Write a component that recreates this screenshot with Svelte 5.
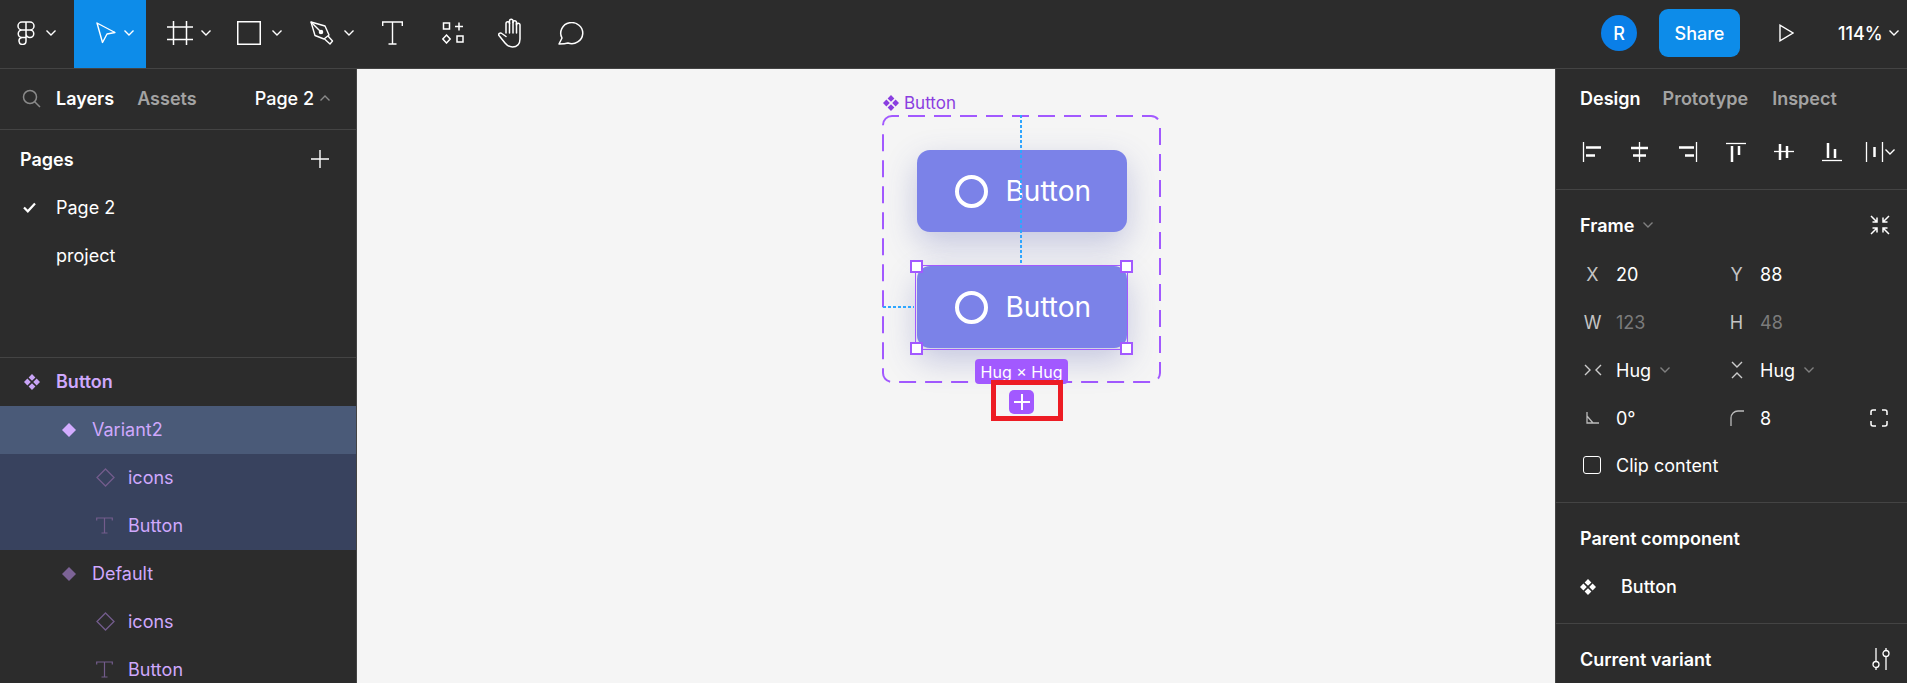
<script>
  const alignIcons = [
    { line: "M1.500 0v20", bars: "M4 5.500h15M4 13.500h9" },
    { line: "M9.500 0v20", bars: "M1 6h17M3 13.500h13" },
    { line: "M18.500 0v20", bars: "M1 5.500h15M7 13.500h9" },
    { line: "M0 1.500h20", bars: "M6 4v16M13 4v9" },
    { line: "M0 9.500h20", bars: "M6 2v16M13 4v12" },
    { line: "M0 18.500h20", bars: "M6 1v15M13 7v9" },
    { line: "M1.500 0v20M17.500 0v20", bars: "M9.500 5v10" }
  ];
  const pages = [
    { name: "Page 2", active: true },
    { name: "project", active: false }
  ];
  const layers = [
    { name: "Button", kind: "set", depth: 0 },
    { name: "Variant2", kind: "main", depth: 1, tone: "sel" },
    { name: "icons", kind: "inst", depth: 2, tone: "child" },
    { name: "Button", kind: "text", depth: 2, tone: "child" },
    { name: "Default", kind: "main", depth: 1, dim: true },
    { name: "icons", kind: "inst", depth: 2 },
    { name: "Button", kind: "text", depth: 2 }
  ];
  const handles = ["tl", "tr", "bl", "br"];
</script>

{#snippet chevron(color = "#fff")}
  <svg class="chev" width="12" height="8" viewBox="0 0 12 8" fill="none" stroke={color} stroke-width="1.4"><path d="M1.5 1.5 6 6l4.500-4.500"/></svg>
{/snippet}

{#snippet setIcon(color, size = 16)}
  <svg width={size} height={size} viewBox="0 0 16 16" fill={color}><path d="M8 0l3.400 3.400L8 6.800 4.600 3.400zM8 9.200l3.400 3.400L8 16l-3.400-3.400zM3.400 4.600 6.800 8l-3.400 3.400L0 8zM12.600 4.600 16 8l-3.400 3.400L9.200 8z"/></svg>
{/snippet}

<div class="app">
  <header class="topbar">
    <div class="tool t-logo">
      <svg width="18" height="24" viewBox="0 0 18 24" fill="none" stroke="#fff" stroke-width="1.5"><path d="M9 1H5a4 4 0 0 0 0 8h4zM9 1h4a4 4 0 0 1 0 8H9zM9 9H5a3.500 3.500 0 0 0 0 7.500h4zM9 9h4a3.750 3.750 0 0 1 0 7.500A3.750 3.750 0 0 1 9 12.750zM9 16.500H5A3.500 3.500 0 1 0 9 20z"/></svg>
      {@render chevron()}
    </div>
    <div class="tool t-move">
      <svg width="20" height="22" viewBox="0 0 20 22" fill="none" stroke="#fff" stroke-width="1.4" stroke-linejoin="round"><path d="M1 1l18 9.500-8 1.500-4.500 8.500z"/></svg>
      {@render chevron()}
    </div>
    <div class="tool t-frame">
      <svg width="26" height="24" viewBox="0 0 26 24" fill="none" stroke="#fff" stroke-width="1.5"><path d="M6.500 0v24M19.500 0v24M0 6h26M0 18.500h26"/></svg>
      {@render chevron()}
    </div>
    <div class="tool t-rect">
      <svg width="24" height="24" viewBox="0 0 24 24" fill="none" stroke="#fff" stroke-width="1.500"><rect x=".75" y=".75" width="22.500" height="22.500"/></svg>
      {@render chevron()}
    </div>
    <div class="tool t-pen">
      <svg width="24" height="24" viewBox="0 0 24 24" fill="none" stroke="#fff" stroke-width="1.400" stroke-linejoin="round"><path d="M1 1l14 4 4 9-5 4-9-3.500z"/><path d="M18 15l4.500 5-2.500 3-5.500-5"/><path d="M1 1l9 9"/><circle cx="11" cy="11" r="1.600" fill="#fff"/></svg>
      {@render chevron()}
    </div>
    <div class="tool t-text">
      <svg width="21" height="24" viewBox="0 0 21 24" fill="none" stroke="#fff" stroke-width="1.400"><path d="M.7 5V1h19.600v4M10.500 1v22M6.500 23h8"/></svg>
    </div>
    <div class="tool t-comp">
      <svg width="23" height="22" viewBox="0 0 23 22" fill="none" stroke="#fff" stroke-width="1.500"><rect x="1.500" y="1" width="6" height="6"/><path d="M17 .5v8M13 4.500h8"/><path d="M4.500 13l3.700 4-3.700 4-3.700-4z"/><rect x="15" y="14" width="6" height="6"/></svg>
    </div>
    <div class="tool t-hand">
      <svg width="27" height="30" viewBox="0 0 27 30" fill="none" stroke="#fff" stroke-width="1.500" stroke-linecap="round" stroke-linejoin="round"><path d="M8 15V5.500a1.750 1.750 0 0 1 3.500 0V3a1.750 1.750 0 0 1 3.500 0v1.500a1.750 1.750 0 0 1 3.500 0V7a1.750 1.750 0 0 1 3.500 0v14c0 5-3 8-7.500 8-3.500 0-5.500-1.500-7.500-4l-6-7.500c-1-1.500 1.200-3.500 2.800-2L8 18.500"/><path d="M11.500 5v10M15 4v11M18.500 5v10"/></svg>
    </div>
    <div class="tool t-comment">
      <svg width="27" height="23" viewBox="0 0 27 23" fill="none" stroke="#fff" stroke-width="1.500" stroke-linejoin="round"><path d="M1 22l3-6a11 10.500 0 1 1 6 5c-3 1-6 1-9 1z"/></svg>
    </div>
    <div class="top-right">
      <div class="avatar">R</div>
      <div class="share">Share</div>
      <svg class="play" width="15" height="18" viewBox="0 0 15 18" fill="none" stroke="#fff" stroke-width="1.400"><path d="M1 1.200v15.600L14 9z"/></svg>
      <div class="zoom-val">114%</div>
      {@render chevron()}
    </div>
  </header>

  <div class="body">
    <aside class="left">
      <div class="left-tabs">
        <svg width="19" height="19" viewBox="0 0 19 19" fill="none" stroke="#8a8a8a" stroke-width="1.500"><circle cx="8" cy="8" r="6.500"/><path d="M12.500 12.500 18 18"/></svg>
        <span class="tab on">Layers</span>
        <span class="tab assets">Assets</span>
        <span class="page-pick">Page 2</span>
        <svg width="12" height="8" viewBox="0 0 12 8" fill="none" stroke="#8a8a8a" stroke-width="1.400"><path d="M1.500 6.500 6 2l4.500 4.500"/></svg>
      </div>
      <div class="pages">
        <div class="row pages-head">
          <span class="strong">Pages</span>
          <svg width="18" height="18" viewBox="0 0 18 18" stroke="#fff" stroke-width="1.400"><path d="M9 0v18M0 9h18"/></svg>
        </div>
        {#each pages as p}
          <div class="row page">
            <span class="check">
              {#if p.active}
                <svg width="13" height="11" viewBox="0 0 13 11" fill="none" stroke="#fff" stroke-width="2.200"><path d="M1 5.500l3.800 3.800L12 1.500"/></svg>
              {/if}
            </span>
            {p.name}
          </div>
        {/each}
      </div>
      <div class="layers">
        {#each layers as l}
          <div class="layer d{l.depth} {l.tone ?? ''}">
            <span class="layer-ico">
              {#if l.kind === "set"}
                {@render setIcon("#c9a4f7")}
              {:else if l.kind === "main"}
                <svg width="14" height="14" viewBox="0 0 14 14" fill={l.dim ? "#7c6396" : "#d3acff"}><path d="M7 0l7 7-7 7-7-7z"/></svg>
              {:else if l.kind === "inst"}
                <svg width="19" height="19" viewBox="0 0 19 19" fill="none" stroke="#735c8c" stroke-width="1.300"><path d="M9.500 1 18 9.500 9.500 18 1 9.500z"/></svg>
              {:else}
                <svg width="17" height="17" viewBox="0 0 17 17" fill="none" stroke="#735c8c" stroke-width="1.200"><path d="M.7 3.500V1h15.600v2.500M8.500 1v15M5.500 16h6"/></svg>
              {/if}
            </span>
            <span class:strong-lilac={l.depth === 0}>{l.name}</span>
          </div>
        {/each}
      </div>
    </aside>

    <main class="canvas">
      <div class="frame-label">
        {@render setIcon("#8a3ee0", 16)}
        <span>Button</span>
      </div>
      <div class="frame">
        <svg class="dash" width="279" height="268" viewBox="0 0 279 268" fill="none" stroke="#a259ff" stroke-width="2"><rect x="1" y="1" width="277" height="266" rx="9" stroke-dasharray="17 9" stroke-dashoffset="10"/></svg>
        <div class="btn">
          <span class="ring"></span>
          <span>Button</span>
        </div>
        <div class="btn selected">
          <span class="ring"></span>
          <span>Button</span>
          {#each handles as h}
            <i class="handle {h}"></i>
          {/each}
        </div>
        <div class="guide-v"></div>
        <div class="guide-h"></div>
      </div>
      <div class="pill">Hug × Hug</div>
      <div class="callout">
        <div class="add">
          <svg width="18" height="18" viewBox="0 0 18 18" stroke="#fff" stroke-width="2"><path d="M9 1v16M1 9h16"/></svg>
        </div>
      </div>
    </main>

    <aside class="right">
      <div class="right-tabs">
        <span class="strong">Design</span>
        <span class="tab proto">Prototype</span>
        <span class="tab inspect">Inspect</span>
      </div>
      <div class="aligns">
        {#each alignIcons as a}
          <svg width="20" height="20" viewBox="0 0 20 20" fill="none" stroke="#fff"><path d={a.line} stroke-width="1.300"/><path d={a.bars} stroke-width="2.500"/></svg>
        {/each}
        <span class="align-chev">{@render chevron()}</span>
      </div>
      <section class="sec frame-sec">
        <div class="prop-head">
          <span class="strong">Frame</span>
          {@render chevron("#808080")}
          <svg class="end" width="20" height="20" viewBox="0 0 20 20" fill="none" stroke="#fff" stroke-width="1.500"><path d="M1 1l6 6M7 2.500V7H2.500M19 1l-6 6M13 2.500V7h4.500M1 19l6-6M7 17.500V13H2.500M19 19l-6-6M13 17.500V13h4.500"/></svg>
        </div>
        <div class="props">
          <span class="lab">X</span><span class="val">20</span>
          <span class="lab">Y</span><span class="val">88</span>
          <i></i>

          <span class="lab">W</span><span class="val dim">123</span>
          <span class="lab">H</span><span class="val dim">48</span>
          <i></i>

          <span class="lab">
            <svg width="18" height="12" viewBox="0 0 18 12" fill="none" stroke="#ccc" stroke-width="1.400"><path d="M1 1l5 5-5 5M17 1l-5 5 5 5"/></svg>
          </span>
          <span class="val">Hug {@render chevron("#808080")}</span>
          <span class="lab">
            <svg width="12" height="18" viewBox="0 0 12 18" fill="none" stroke="#ccc" stroke-width="1.400"><path d="M1 1l5 5 5-5M1 17l5-5 5 5"/></svg>
          </span>
          <span class="val">Hug {@render chevron("#808080")}</span>
          <i></i>

          <span class="lab">
            <svg width="13" height="12" viewBox="0 0 13 12" fill="none" stroke="#bbb" stroke-width="1.300"><path d="M1 0v11h12M1 4l6 7"/></svg>
          </span>
          <span class="val">0°</span>
          <span class="lab">
            <svg width="14" height="16" viewBox="0 0 14 16" fill="none" stroke="#bbb" stroke-width="1.300"><path d="M1 16V8a7 7 0 0 1 7-7h6"/></svg>
          </span>
          <span class="val">8</span>
          <svg class="corners" width="18" height="18" viewBox="0 0 18 18" fill="none" stroke="#fff" stroke-width="1.500"><path d="M1 6V3a2 2 0 0 1 2-2h3M12 1h3a2 2 0 0 1 2 2v3M17 12v3a2 2 0 0 1-2 2h-3M6 17H3a2 2 0 0 1-2-2v-3"/></svg>
        </div>
        <label class="clip"><span class="box"></span>Clip content</label>
      </section>
      <section class="sec parent-sec">
        <div class="prop-head strong">Parent component</div>
        <div class="parent">
          {@render setIcon("#fff")}
          <span>Button</span>
        </div>
      </section>
      <section class="sec variant-sec">
        <div class="prop-head">
          <span class="strong">Current variant</span>
          <svg class="end" width="18" height="22" viewBox="0 0 18 22" fill="none" stroke="#fff" stroke-width="1.300"><path d="M4 0v13M4 20v2M14 0v2M14 9v13"/><circle cx="4" cy="16.500" r="3"/><circle cx="14" cy="5.500" r="3"/></svg>
        </div>
      </section>
    </aside>
  </div>
</div>

<style>
  :global(body) {
    margin: 0;
    background: #2c2c2c;
    font-family: Inter, "Liberation Sans", sans-serif;
    font-size: 18px;
    color: #fff;
  }

  svg {
    display: block;
    flex: none;
  }

  .app {
    width: 1907px;
    height: 683px;
    display: flex;
    flex-direction: column;
    overflow: hidden;
  }

  .topbar {
    height: 68px;
    flex: none;
    display: flex;
    align-items: stretch;
    background: #2c2c2c;
    border-bottom: 1px solid #444;
  }

  .tool {
    display: flex;
    align-items: center;
    flex: none;
    box-sizing: border-box;
    padding-bottom: 2px;
  }

  .t-logo { width: 74px; padding-left: 17px; gap: 10px; }
  .t-move { width: 72px; padding-left: 22px; gap: 7px; background: #0d8ce9; }
  .t-frame { width: 71px; padding-left: 21px; gap: 7px; }
  .t-rect { width: 72px; padding-left: 20px; gap: 10px; }
  .t-pen { width: 72px; padding-left: 21px; gap: 9px; }
  .t-text { width: 60px; padding-left: 21px; }
  .t-comp { width: 77px; padding-left: 21px; }
  .t-hand { width: 60px; }
  .t-comment { width: 60px; }

  .top-right {
    margin-left: auto;
    display: flex;
    align-items: center;
    padding: 0 7px 2px 0;
  }

  .avatar {
    width: 36px;
    height: 36px;
    border-radius: 50%;
    background: #0a7fe8;
    display: flex;
    align-items: center;
    justify-content: center;
    font-weight: 500;
  }

  .share {
    width: 81px;
    height: 48px;
    margin-left: 22px;
    border-radius: 9px;
    background: #0d8ce9;
    display: flex;
    align-items: center;
    justify-content: center;
    font-weight: 500;
  }

  .play { margin-left: 39px; }

  .zoom-val {
    width: 42px;
    margin-left: 44px;
    margin-right: 8px;
    white-space: nowrap;
    font-weight: 500;
  }

  .body {
    flex: 1;
    display: flex;
    min-height: 0;
  }

  .left {
    width: 356px;
    flex: none;
    border-right: 1px solid #444;
    background: #2c2c2c;
  }

  .left-tabs {
    height: 61px;
    box-sizing: border-box;
    padding: 0 0 2px 22px;
    display: flex;
    align-items: center;
    border-bottom: 1px solid #444;
    font-weight: 600;
  }

  .tab { color: #a3a3a3; font-weight: 600; }
  .tab.on { color: #fff; margin-left: 15px; }
  .tab.assets { margin-left: 23px; }

  .page-pick {
    margin-left: auto;
    margin-right: 5px;
    font-weight: 500;
  }

  .left-tabs svg:last-child { margin-right: 25px; }

  .pages {
    height: 228px;
    box-sizing: border-box;
    padding-top: 6px;
    border-bottom: 1px solid #444;
  }

  .row {
    height: 48px;
    box-sizing: border-box;
    padding-bottom: 2px;
    display: flex;
    align-items: center;
  }

  .pages-head {
    justify-content: space-between;
    padding: 0 27px 2px 20px;
  }

  .strong { font-weight: 600; }

  .page { padding-left: 23px; }

  .check {
    width: 33px;
    flex: none;
  }

  .layer {
    height: 48px;
    box-sizing: border-box;
    padding-bottom: 1px;
    display: flex;
    align-items: center;
    color: #cfa8fd;
  }

  .layer-ico {
    display: flex;
    align-items: center;
    justify-content: flex-start;
    width: 32px;
    flex: none;
  }

  .d0 { padding-left: 24px; }
  .d1 { padding-left: 62px; }
  .d1 .layer-ico { width: 30px; }
  .d2 { padding-left: 96px; }
  .sel { background: #4a5a78; }
  .child { background: #38425e; }
  .strong-lilac { font-weight: 600; }

  .canvas {
    position: relative;
    flex: 1;
    background: #f5f5f5;
    overflow: hidden;
  }

  .frame-label {
    position: absolute;
    left: 526px;
    top: 24px;
    display: flex;
    align-items: center;
    gap: 5px;
    color: #8a3ee0;
    font-size: 17px;
  }

  .frame {
    position: absolute;
    left: 525px;
    top: 46px;
    width: 279px;
    height: 268px;
    box-sizing: border-box;
    padding: 35px 0 0 34.500px;
    display: flex;
    flex-direction: column;
    align-items: flex-start;
    gap: 34px;
  }

  .dash {
    position: absolute;
    left: 0;
    top: 0;
  }

  .btn {
    position: relative;
    width: 210px;
    height: 82px;
    box-sizing: border-box;
    padding-left: 38px;
    flex: none;
    display: flex;
    align-items: center;
    gap: 18px;
    border-radius: 13px;
    background: #7b82e8;
    box-shadow: 0 12px 32px rgba(70, 75, 170, 0.28);
    font-size: 28px;
    color: #fff;
  }

  .ring {
    width: 33px;
    height: 33px;
    box-sizing: border-box;
    border: 4px solid #fff;
    border-radius: 50%;
  }

  .selected::after {
    content: "";
    position: absolute;
    inset: -1.500px;
    border: 1.500px solid #a259ff;
  }

  .handle {
    position: absolute;
    z-index: 1;
    width: 13px;
    height: 13px;
    box-sizing: border-box;
    border: 2px solid #a259ff;
    background: #fff;
  }

  .tl { left: -6.500px; top: -6.500px; }
  .tr { right: -6.500px; top: -6.500px; }
  .bl { left: -6.500px; bottom: -6.500px; }
  .br { right: -6.500px; bottom: -6.500px; }

  .guide-v {
    position: absolute;
    left: 138px;
    top: 0;
    width: 2px;
    height: 148px;
    background: repeating-linear-gradient(to bottom, #2ea6ff 0 3px, transparent 3px 5px);
  }

  .guide-h {
    position: absolute;
    left: 1px;
    top: 191px;
    width: 31px;
    height: 2px;
    background: repeating-linear-gradient(to right, #2ea6ff 0 3px, transparent 3px 5px);
  }

  .pill {
    position: absolute;
    left: 618px;
    top: 290px;
    width: 93px;
    height: 25px;
    border-radius: 4px;
    background: #a259ff;
    color: #fff;
    font-size: 16px;
    display: flex;
    align-items: center;
    justify-content: center;
  }

  .callout {
    position: absolute;
    left: 634px;
    top: 311px;
    width: 72px;
    height: 41px;
    box-sizing: border-box;
    border: 5px solid #ed1c24;
    padding: 5px 0 0 13px;
  }

  .add {
    width: 25px;
    height: 24px;
    border-radius: 5px;
    background: #a259ff;
    display: flex;
    align-items: center;
    justify-content: center;
  }

  .right {
    width: 352px;
    flex: none;
    background: #2c2c2c;
    border-left: 1px solid #444;
    box-sizing: border-box;
  }

  .right-tabs {
    height: 60px;
    box-sizing: border-box;
    padding: 0 0 2px 24px;
    display: flex;
    align-items: center;
  }

  .tab.proto { margin-left: 22px; }
  .tab.inspect { margin-left: 24px; }

  .aligns {
    height: 60px;
    padding-left: 26px;
    display: flex;
    align-items: center;
    gap: 28px;
    position: relative;
    padding-bottom: 14px;
    box-sizing: border-box;
  }

  .aligns svg:nth-child(7) { margin-left: -5px; }

  .align-chev {
    position: absolute;
    left: 328px;
    top: 19px;
  }

  .sec {
    border-top: 1px solid #444;
    padding: 12px 0;
  }

  .prop-head {
    height: 48px;
    padding: 0 17px 2px 24px;
    display: flex;
    align-items: center;
    gap: 8px;
    box-sizing: border-box;
  }

  .end { margin-left: auto; }

  .props {
    display: grid;
    grid-template-columns: 36px 108px 36px 110px 24px;
    grid-auto-rows: 48px;
    align-items: center;
    padding-left: 24px;
  }

  .lab {
    color: #c4c4c4;
    display: flex;
    justify-content: center;
    width: 25px;
  }

  .val {
    display: flex;
    align-items: center;
    gap: 8px;
  }

  .dim { color: #7b7b7b; }

  .clip {
    height: 48px;
    box-sizing: border-box;
    padding: 0 0 2px 27px;
    display: flex;
    align-items: center;
    gap: 15px;
  }

  .box {
    width: 18px;
    height: 18px;
    box-sizing: border-box;
    border: 1.500px solid #fff;
    border-radius: 3px;
  }

  .parent {
    height: 48px;
    box-sizing: border-box;
    padding: 0 0 1px 24px;
    display: flex;
    align-items: center;
    gap: 25px;
    font-weight: 500;
  }

  .variant-sec { padding-bottom: 0; }
</style>
